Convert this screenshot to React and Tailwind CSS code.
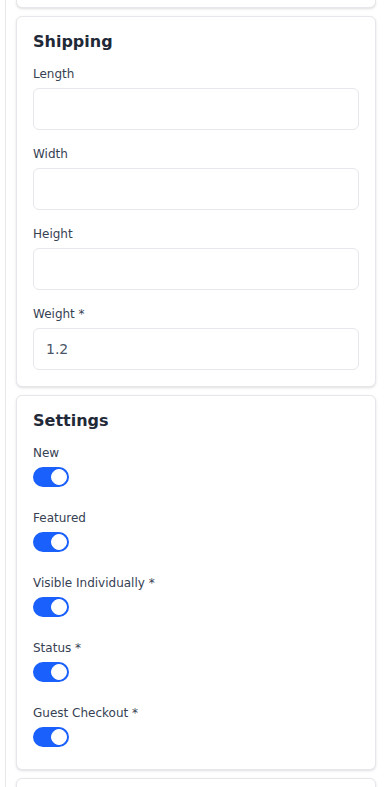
import { useState } from 'react';

const shippingFields = [
  { id: 'length', label: 'Length', value: '' },
  { id: 'width', label: 'Width', value: '' },
  { id: 'height', label: 'Height', value: '' },
  { id: 'weight', label: 'Weight *', value: '1.2' },
];

const settingsFields = [
  { id: 'new', label: 'New' },
  { id: 'featured', label: 'Featured' },
  { id: 'visible', label: 'Visible Individually *' },
  { id: 'status', label: 'Status *' },
  { id: 'guest', label: 'Guest Checkout *' },
];

function Toggle({ checked, onChange }) {
  return (
    <button
      type="button"
      onClick={onChange}
      className={`relative block w-9 h-5 rounded-full transition ${checked ? 'bg-[#1a60fc]' : 'bg-gray-200'}`}
    >
      <span
        className={`absolute top-[2px] w-4 h-4 rounded-full bg-white border border-white transition-all ${checked ? 'left-[18px]' : 'left-[2px]'}`}
      />
    </button>
  );
}

export default function App() {
  const [values, setValues] = useState(
    Object.fromEntries(shippingFields.map(f => [f.id, f.value]))
  );
  const [flags, setFlags] = useState(
    Object.fromEntries(settingsFields.map(f => [f.id, true]))
  );

  const card = 'bg-white border border-gray-200 rounded-md shadow-sm';

  return (
    <div className="min-h-[787px] bg-white flex text-gray-800" style={{ fontFamily: '"DejaVu Sans", sans-serif' }}>
      <div className="w-[5px] shrink-0" />
      <div className="flex-1 border-l border-gray-200 pl-[10px] pr-4 flex flex-col gap-2 overflow-hidden">
        {/* tail of the card above */}
        <div className="h-2 bg-white border-x border-b border-gray-200 rounded-b-md shadow-sm" />

        {/* Shipping */}
        <div className={`${card} px-4 pt-[13px] pb-4`}>
          <h2 className="text-base leading-6 font-bold text-[#1f2937]">Shipping</h2>
          <div className="mt-[10px] flex flex-col gap-[14px]">
            {shippingFields.map(f => (
              <div key={f.id}>
                <label htmlFor={f.id} className="block text-xs leading-5 text-gray-700 mb-[4px]">{f.label}</label>
                <input
                  id={f.id}
                  value={values[f.id]}
                  onChange={e => setValues(v => ({ ...v, [f.id]: e.target.value }))}
                  className="block w-full h-[42px] px-3 text-sm text-gray-600 bg-white border border-gray-200 rounded-md outline-none"
                />
              </div>
            ))}
          </div>
        </div>

        {/* Settings */}
        <div className={`${card} px-4 pt-[13px] pb-[22px]`}>
          <h2 className="text-base leading-6 font-bold text-[#1f2937]">Settings</h2>
          <div className="mt-[10px] flex flex-col gap-[21px]">
            {settingsFields.map(f => (
              <div key={f.id}>
                <div className="text-xs leading-5 text-gray-700 mb-[4px]">{f.label}</div>
                <Toggle checked={flags[f.id]} onChange={() => setFlags(s => ({ ...s, [f.id]: !s[f.id] }))} />
              </div>
            ))}
          </div>
        </div>

        {/* next card, cut off */}
        <div className={`${card} h-24`} />
      </div>
    </div>
  );
}
